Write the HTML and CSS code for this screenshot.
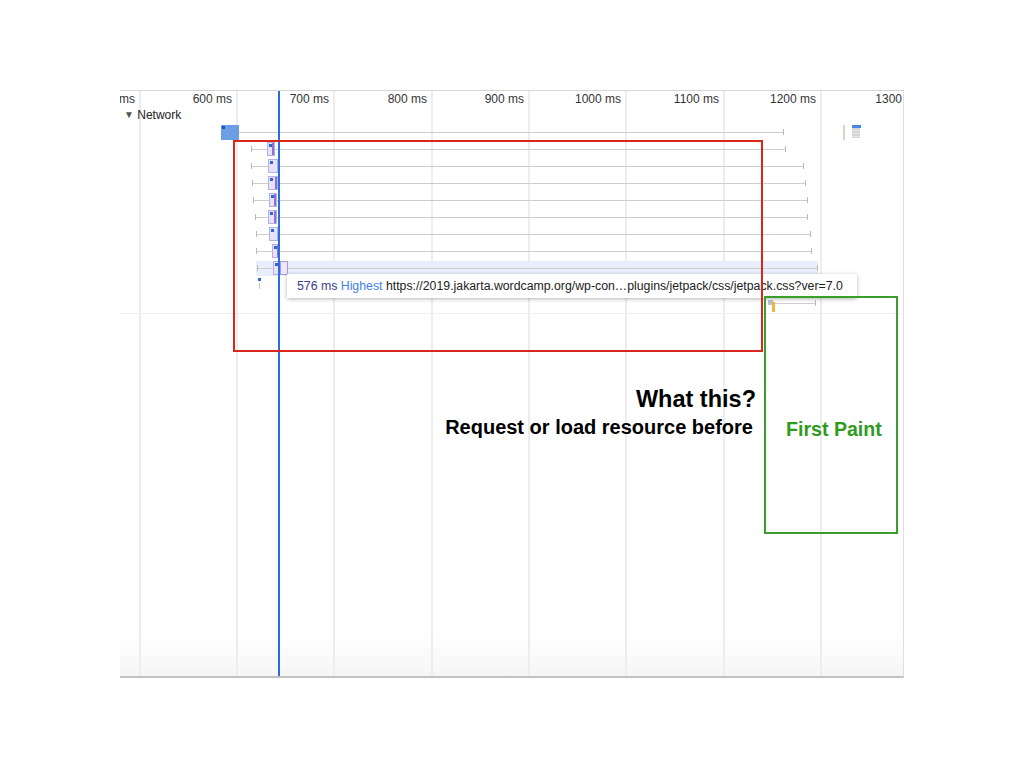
FILE: index.html
```html
<!DOCTYPE html>
<html lang="en">
<head>
<meta charset="UTF-8">
<title>Network timing</title>
<link rel="stylesheet" href="styles.css">
</head>
<body>
<div class="slide">
    <div class="timeline">
        <!-- grid -->
        <div class="grid" style="left:19px"></div>
        <div class="grid" style="left:116px"></div>
        <div class="grid" style="left:213px"></div>
        <div class="grid" style="left:311px"></div>
        <div class="grid" style="left:408px"></div>
        <div class="grid" style="left:505px"></div>
        <div class="grid" style="left:603px"></div>
        <div class="grid" style="left:700px"></div>

        <div class="tick-label" style="left:-85px">ms</div>
        <div class="tick-label" style="left:12px">600 ms</div>
        <div class="tick-label" style="left:109px">700 ms</div>
        <div class="tick-label" style="left:207px">800 ms</div>
        <div class="tick-label" style="left:304px">900 ms</div>
        <div class="tick-label" style="left:401px">1000 ms</div>
        <div class="tick-label" style="left:499px">1100 ms</div>
        <div class="tick-label" style="left:596px">1200 ms</div>
        <div class="tick-label last" style="left:682px">1300</div>

        <div class="track-title"><span class="arrow">&#9660;</span> Network</div>

        <div class="sep"></div>

        <!-- first request -->
        <div class="doc" style="left:101px;top:34px;width:18px"></div>
        <div class="req" style="left:119px;top:34px;width:545px"><div class="line no-start"></div></div>

        <div class="req" style="left:131px;top:51px;width:535px"><div class="line"></div><div class="box dl" style="left:16px;width:8px"></div></div>
        <div class="req" style="left:131px;top:68px;width:553px"><div class="line"></div><div class="box" style="left:17px;width:10px"></div></div>
        <div class="req" style="left:132px;top:85px;width:554px"><div class="line"></div><div class="box dl" style="left:16px;width:10px"></div></div>
        <div class="req" style="left:133px;top:102px;width:555px"><div class="line"></div><div class="box dl" style="left:16px;width:8px"></div></div>
        <div class="req" style="left:135px;top:119px;width:553px"><div class="line"></div><div class="box dl" style="left:13px;width:9px"></div></div>
        <div class="req" style="left:136px;top:136px;width:555px"><div class="line"></div><div class="box" style="left:13px;width:9px"></div></div>
        <div class="req" style="left:136px;top:153px;width:556px"><div class="line"></div><div class="box dl" style="left:16px;width:8px"></div></div>
        <div class="row-hover" style="left:136px;top:170px;width:562px"></div>
        <div class="req" style="left:137px;top:170px;width:561px"><div class="line"></div><div class="box" style="left:16px;width:8px"></div><div class="box wait" style="left:23px;width:8px"></div></div>
        <div class="small-req" style="left:138px;top:187px"></div>

        <!-- after first paint -->
        <div class="late-doc" style="left:648px;top:209px"></div>
        <div class="req" style="left:655px;top:205px;width:41px"><div class="line no-start"></div></div>
        <div class="late-bar" style="left:652px;top:211px"></div>

        <!-- overview marker on the right -->
        <div class="mini-line" style="left:723px;top:34px"></div>
        <div class="mini-blue" style="left:732px;top:34px"></div>
        <div class="mini-gray" style="left:732px;top:37px"></div>

        <div class="cursor" style="left:158px"></div>

        <div class="tooltip" style="left:167px;top:183px">
            <span class="t-time">576 ms</span>
            <span class="t-prio">Highest</span>
            <span class="t-url">https://2019.jakarta.wordcamp.org/wp-con…plugins/jetpack/css/jetpack.css?ver=7.0</span>
        </div>
    </div>

    <div class="mark red"></div>
    <div class="mark green"></div>

    <div class="note question">What this?</div>
    <div class="note before">Request or load resource before</div>
    <div class="note paint">First Paint</div>
</div>
</body>
</html>
```
FILE: styles.css
```css
body{
    margin: 0;
    background: #fff;
    font-family: "Liberation Sans", Arial, sans-serif;
}
.slide{
    position: relative;
    width: 1024px;
    height: 768px;
    padding: 90px 0 0 120px;
    box-sizing: border-box;
}
.timeline{
    position: relative;
    width: 784px;
    height: 588px;
    box-sizing: border-box;
    overflow: hidden;
    border-top: 1px solid #d6d6d6;
    border-right: 1px solid #e0e0e0;
    border-bottom: 2px solid #c2c2c2;
    background: linear-gradient(to bottom, #fff 93%, #f5f5f5 100%);
    color: #333;
    font-size: 12px;
}
.grid{
    position: absolute;
    top: 0;
    bottom: 0;
    width: 2px;
    background: #ededed;
}
.tick-label{
    position: absolute;
    top: 1px;
    width: 100px;
    text-align: right;
    line-height: 14px;
    white-space: nowrap;
    color: #333;
}
.track-title{
    position: absolute;
    left: 4px;
    top: 17px;
    line-height: 14px;
    color: #222;
}
.track-title .arrow{
    font-size: 10px;
    color: #555;
    vertical-align: 1px;
}
.sep{
    position: absolute;
    left: 0;
    right: 0;
    top: 222px;
    height: 1px;
    background: #efefef;
}
.doc{
    position: absolute;
    height: 15px;
    background: #6b9ee2;
}
.doc::before{
    content: '';
    position: absolute;
    left: 1px;
    top: 1px;
    width: 3px;
    height: 3px;
    background: #1f55c8;
}
.req{
    position: absolute;
    height: 14px;
}
.req .line{
    position: absolute;
    left: 0;
    right: 0;
    top: 4px;
    height: 6px;
    border-left: 1px solid #b9b9b9;
    border-right: 1px solid #b9b9b9;
}
.req .line.no-start{
    border-left: none;
}
.req .line::before{
    content: '';
    position: absolute;
    left: 0;
    right: 0;
    top: 3px;
    height: 1px;
    background: #cdcdcd;
}
.box{
    position: absolute;
    top: 0;
    height: 14px;
    box-sizing: border-box;
    background: #e7e2f8;
    border: 1px solid #b9ade8;
}
.box::before{
    content: '';
    position: absolute;
    left: 1px;
    top: 1px;
    width: 3px;
    height: 3px;
    background: #2c66dc;
}
.box.dl::after{
    content: '';
    position: absolute;
    right: 0;
    top: 0;
    bottom: 0;
    width: 2px;
    background: #8d72d6;
}
.box.wait{
    background: #ece8fa;
    border-color: #a896e0;
}
.box.wait::before{
    display: none;
}
.row-hover{
    position: absolute;
    height: 15px;
    background: #e8eefb;
}
.small-req{
    position: absolute;
    width: 3px;
    height: 3px;
    background: #2c66dc;
}
.small-req::after{
    content: '';
    position: absolute;
    left: 1px;
    top: 5px;
    width: 1px;
    height: 6px;
    background: #c4c4c4;
}
.late-doc{
    position: absolute;
    width: 5px;
    height: 5px;
    background: #b9c3cf;
}
.late-bar{
    position: absolute;
    width: 3px;
    height: 10px;
    background: #f0b53f;
}
.mini-line{
    position: absolute;
    width: 2px;
    height: 15px;
    background: #c9dcc4;
}
.mini-blue{
    position: absolute;
    width: 9px;
    height: 3px;
    background: #4a86e0;
}
.mini-gray{
    position: absolute;
    width: 8px;
    height: 10px;
    background: repeating-linear-gradient(to bottom, #d3d3d3 0, #d3d3d3 2px, #e6e6e6 2px, #e6e6e6 3px);
}
.cursor{
    position: absolute;
    top: 0;
    bottom: 0;
    width: 2px;
    background: #2a6ddc;
}
.tooltip{
    position: absolute;
    width: 570px;
    height: 24px;
    box-sizing: border-box;
    padding-left: 10px;
    background: #fff;
    box-shadow: 0 1px 4px rgba(0,0,0,.3);
    font-size: 12.3px;
    line-height: 24px;
    white-space: nowrap;
}
.t-time{
    color: #3a3a8e;
}
.t-prio{
    color: #3f80e0;
}
.t-url{
    color: #222;
}
.mark{
    position: absolute;
    box-sizing: border-box;
    border: 2px solid;
}
.mark.red{
    left: 233px;
    top: 140px;
    width: 530px;
    height: 212px;
    border-color: #d8261b;
}
.mark.green{
    left: 764px;
    top: 296px;
    width: 134px;
    height: 238px;
    border-color: #3a9e2a;
}
.note{
    position: absolute;
    font-weight: bold;
    white-space: nowrap;
    color: #000;
}
.note.question{
    right: 268px;
    top: 385px;
    font-size: 23.5px;
    line-height: 28px;
}
.note.before{
    right: 271px;
    top: 415px;
    font-size: 20px;
    line-height: 24px;
}
.note.paint{
    left: 786px;
    top: 417px;
    font-size: 19.6px;
    line-height: 24px;
    color: #2f9b1e;
}
```
